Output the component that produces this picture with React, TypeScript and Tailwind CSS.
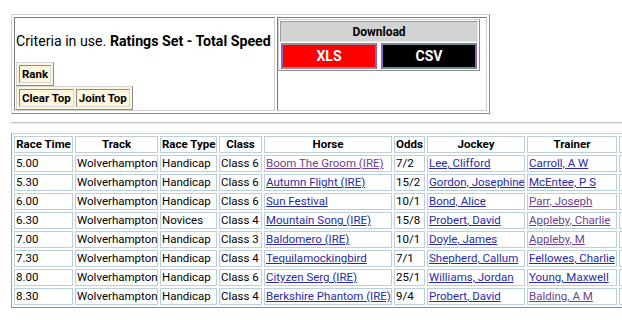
import React from "react";

type Row = {
  time: string;
  type: string;
  cls: string;
  horse: string;
  odds: string;
  jockey: string;
  trainer: string;
  horseSeen?: boolean;
  trainerSeen?: boolean;
};

const rows: Row[] = [
  { time: "5.00", type: "Handicap", cls: "Class 6", horse: "Boom The Groom (IRE)", odds: "7/2", jockey: "Lee, Clifford", trainer: "Carroll, A W", horseSeen: true },
  { time: "5.30", type: "Handicap", cls: "Class 6", horse: "Autumn Flight (IRE)", odds: "15/2", jockey: "Gordon, Josephine", trainer: "McEntee, P S" },
  { time: "6.00", type: "Handicap", cls: "Class 6", horse: "Sun Festival", odds: "10/1", jockey: "Bond, Alice", trainer: "Parr, Joseph", trainerSeen: true },
  { time: "6.30", type: "Novices", cls: "Class 4", horse: "Mountain Song (IRE)", odds: "15/8", jockey: "Probert, David", trainer: "Appleby, Charlie", trainerSeen: true },
  { time: "7.00", type: "Handicap", cls: "Class 3", horse: "Baldomero (IRE)", odds: "10/1", jockey: "Doyle, James", trainer: "Appleby, M", trainerSeen: true },
  { time: "7.30", type: "Handicap", cls: "Class 4", horse: "Tequilamockingbird", odds: "7/1", jockey: "Shepherd, Callum", trainer: "Fellowes, Charlie" },
  { time: "8.00", type: "Handicap", cls: "Class 6", horse: "Cityzen Serg (IRE)", odds: "25/1", jockey: "Williams, Jordan", trainer: "Young, Maxwell" },
  { time: "8.30", type: "Handicap", cls: "Class 4", horse: "Berkshire Phantom (IRE)", odds: "9/4", jockey: "Probert, David", trainer: "Balding, A M", trainerSeen: true },
];

const headers = ["Race Time", "Track", "Race Type", "Class", "Horse", "Odds", "Jockey", "Trainer", ""];
const widths = ["w-[59px]", "w-[83px]", "w-[57px]", "w-[43px]", "w-[128px]", "w-[31px]", "w-[98px]", "w-[90px]", "w-[60px]"];

function Link({ children, seen }: { children: React.ReactNode; seen?: boolean }) {
  return (
    <a href="#" className={seen ? "text-[#6e3f95] underline" : "text-[#2a2aa8] underline"}>
      {children}
    </a>
  );
}

function ChoiceTable({ labels }: { labels: string[] }) {
  return (
    <div className="inline-flex gap-[2px] p-[2px] bg-[#fdf6dc] border border-t-[#d6d6d6] border-l-[#d6d6d6] border-b-[#8a8a8a] border-r-[#8a8a8a]">
      {labels.map((l) => (
        <span
          key={l}
          className="px-[2px] py-[1px] leading-[14px] text-[11.5px] font-bold text-black border border-t-[#8a8a8a] border-l-[#8a8a8a] border-b-[#d6d6d6] border-r-[#d6d6d6]"
        >
          {l}
        </span>
      ))}
    </div>
  );
}

export default function App() {
  const cell =
    "border border-[#b9d0df] px-[1px] h-[17px] leading-[15px] whitespace-nowrap overflow-hidden align-middle";
  return (
    <div className="w-[622px] h-[320px] overflow-hidden bg-white font-['Roboto',sans-serif] text-black">
      {/* criteria + download panel */}
      <div className="pt-[14px] pl-[11px]">
        <div className="inline-flex gap-[2px] p-[2px] border border-t-[#cfcfcf] border-l-[#cfcfcf] border-b-[#8c8c8c] border-r-[#8c8c8c]">
          <div className="w-[261px] border border-t-[#7a7a7a] border-l-[#7a7a7a] border-b-[#cfcfcf] border-r-[#cfcfcf]">
            <div className="pt-[15px] pl-[1px] text-[14.2px] leading-[16px] whitespace-nowrap">
              Criteria in use. <b>Ratings Set - Total Speed</b>
            </div>
            <div className="mt-[13px] ml-[1px] flex flex-col items-start">
              <ChoiceTable labels={["Rank"]} />
              <ChoiceTable labels={["Clear Top", "Joint Top"]} />
            </div>
          </div>
          <div className="w-[210px] pt-[1px] border border-t-[#7a7a7a] border-l-[#7a7a7a] border-b-[#cfcfcf] border-r-[#cfcfcf]">
            <div className="w-[202px] flex flex-col gap-[1px] p-[1px] border border-t-[#cfcfcf] border-l-[#cfcfcf] border-b-[#8c8c8c] border-r-[#8c8c8c]">
              <div className="h-[21px] flex items-center justify-center bg-[#d3d3d3] border border-t-[#9a9a9a] border-l-[#9a9a9a] border-b-[#e6e6e6] border-r-[#e6e6e6] text-[12px] font-bold">
                Download
              </div>
              <div className="flex gap-[4px] px-[1px]">
                <button className="flex-1 h-[26px] bg-[#ff0000] text-white text-[14px] font-bold border-2 border-x-[#8b5fd0] border-y-[#a08a92]">
                  XLS
                </button>
                <button className="flex-1 h-[26px] bg-black text-white text-[14px] font-bold border-2 border-x-[#8b5fd0] border-y-[#6f8d8f]">
                  CSV
                </button>
              </div>
            </div>
          </div>
        </div>
      </div>

      <div className="mt-[8px] ml-[11px] h-[2px] border-t border-t-[#c4c4c4] border-b border-b-[#ececec]" />

      {/* race list */}
      <div className="mt-[9px] ml-[11px]">
        <table className="table-fixed w-[671px] border-separate border-spacing-[2px] border border-t-[#cfcfcf] border-l-[#a0a0a0] border-b-[#8c8c8c] border-r-[#8c8c8c] text-[11.5px]">
          <thead>
            <tr>
              {headers.map((h, i) => (
                <th key={i} className={`${cell} ${widths[i]} font-bold text-center`}>
                  {h}
                </th>
              ))}
            </tr>
          </thead>
          <tbody>
            {rows.map((r) => (
              <tr key={r.time}>
                <td className={cell}>{r.time}</td>
                <td className={cell}>Wolverhampton</td>
                <td className={cell}>{r.type}</td>
                <td className={cell}>{r.cls}</td>
                <td className={cell}>
                  <Link seen={r.horseSeen}>{r.horse}</Link>
                </td>
                <td className={cell}>{r.odds}</td>
                <td className={cell}>
                  <Link>{r.jockey}</Link>
                </td>
                <td className={cell}>
                  <Link seen={r.trainerSeen}>{r.trainer}</Link>
                </td>
                <td className={cell}></td>
              </tr>
            ))}
          </tbody>
        </table>
      </div>
    </div>
  );
}
